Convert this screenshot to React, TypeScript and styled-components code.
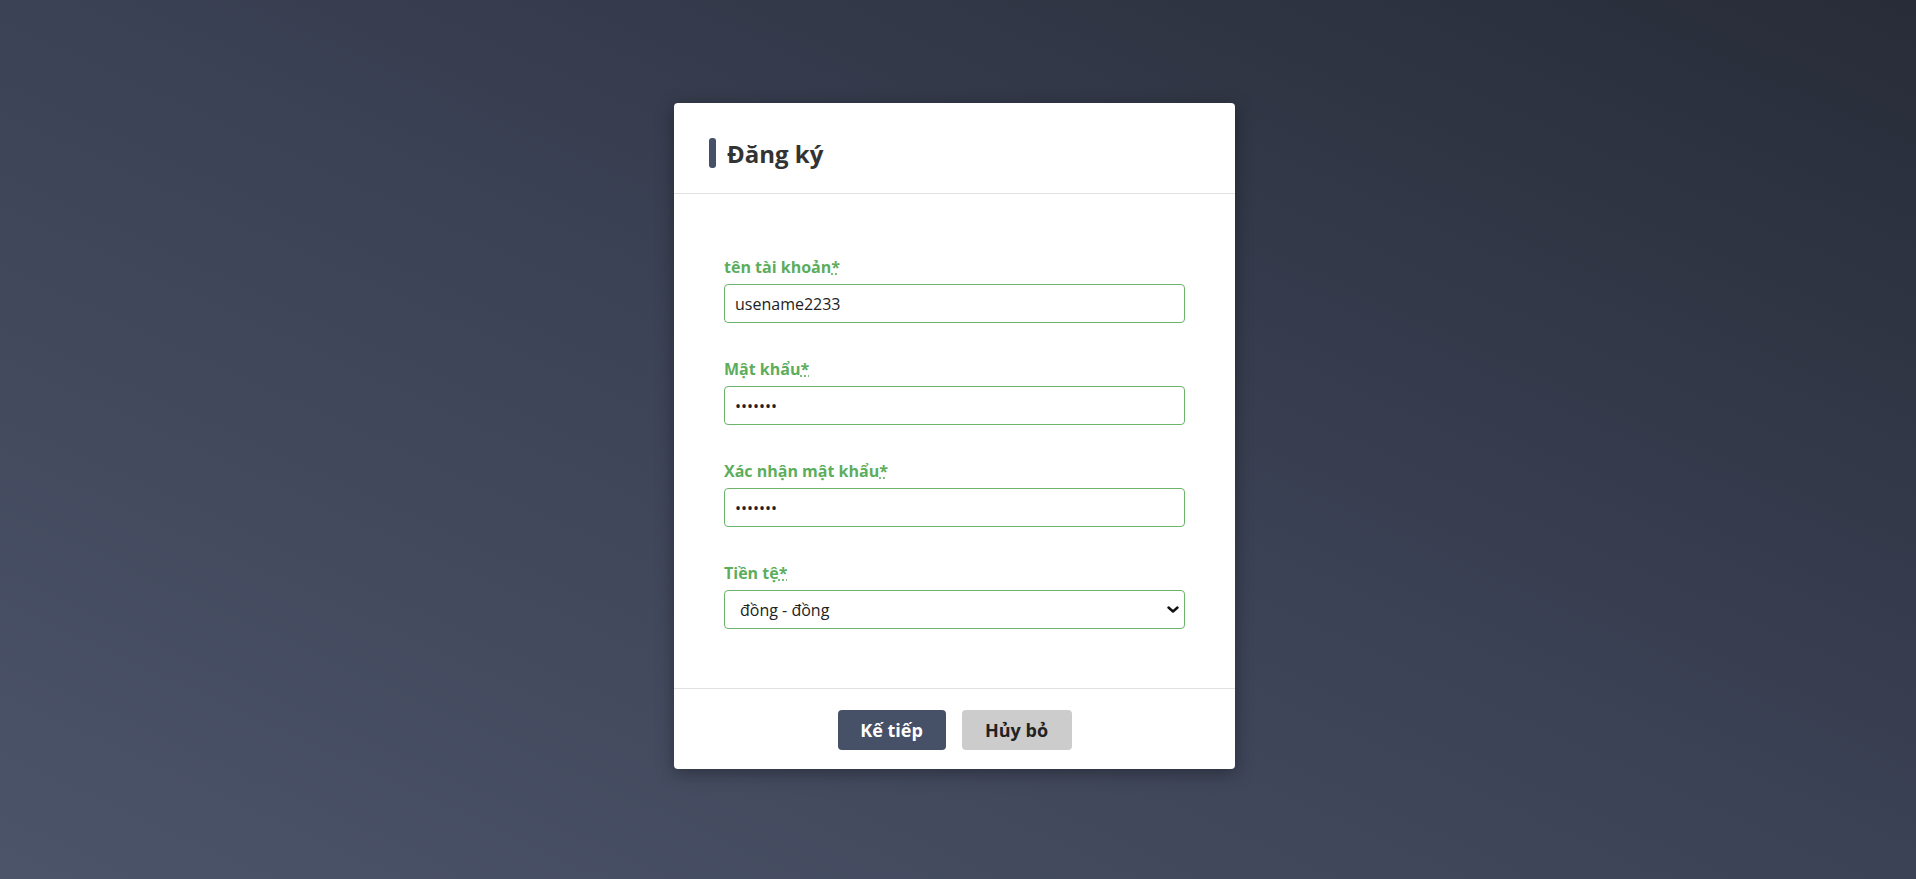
import styled, { createGlobalStyle } from 'styled-components'

const GlobalStyle = createGlobalStyle`
  html, body {
    margin: 0;
    padding: 0;
    height: 100%;
  }
  body {
    font-family: 'Open Sans', 'Noto Sans', sans-serif;
  }
`

const fields = [
  { label: 'tên tài khoản', type: 'text', value: 'usename2233' },
  { label: 'Mật khẩu', type: 'password', value: '1234567' },
  { label: 'Xác nhận mật khẩu', type: 'password', value: '1234567' },
]

const App = () => {
  return (
    <Page>
      <GlobalStyle />
      <Card>
        <Header>
          <Bar />
          <Title>Đăng ký</Title>
        </Header>
        <Body>
          {fields.map((f) => (
            <Group key={f.label}>
              <Label>
                {f.label}
                <Req title="required">*</Req>
              </Label>
              <Input type={f.type} defaultValue={f.value} />
            </Group>
          ))}
          <Group>
            <Label>
              Tiền tệ
              <Req title="required">*</Req>
            </Label>
            <SelectWrap>
              <Select defaultValue="vnd">
                <option value="vnd">đồng - đồng</option>
              </Select>
              <Chevron viewBox="0 0 12 7" width="12" height="7">
                <path d="M1.5 1.5 L6 5.5 L10.5 1.5" fill="none" stroke="#111" strokeWidth="2.4" strokeLinecap="round" strokeLinejoin="round" />
              </Chevron>
            </SelectWrap>
          </Group>
        </Body>
        <Footer>
          <Button $primary>Kế tiếp</Button>
          <Button>Hủy bỏ</Button>
        </Footer>
      </Card>
    </Page>
  )
}

export default App

const Page = styled.div`
  min-height: 100vh;
  display: flex;
  align-items: center;
  justify-content: center;
  background: linear-gradient(to top right, #4c546a 0%, #3b4255 50%, #282c38 100%);
`

const Card = styled.div`
  width: 561px;
  margin-left: -7px;
  margin-top: -7px;
  background: #fff;
  border-radius: 4px;
  box-shadow: 0 4px 18px rgba(0, 0, 0, 0.35);
`

const Header = styled.div`
  display: flex;
  align-items: center;
  gap: 11px;
  height: 91px;
  padding: 10px 0 0 35px;
  box-sizing: border-box;
  border-bottom: 1px solid #e2e2e2;
`

const Bar = styled.span`
  width: 7px;
  height: 30px;
  border-radius: 3px;
  background: #465066;
`

const Title = styled.h2`
  margin: 0;
  font-size: 24px;
  font-weight: 700;
  color: #333;
`

const Body = styled.div`
  padding: 61px 50px 20px;
`

const Group = styled.div`
  display: flex;
  flex-direction: column;
  gap: 5px;
  margin-bottom: 34px;
  &:last-child {
    margin-bottom: 39px;
  }
`

const Label = styled.label`
  font-size: 16px;
  line-height: 24px;
  font-weight: 700;
  color: #5cad5c;
`

const Req = styled.abbr`
  text-decoration: underline dotted;
  cursor: help;
`

const Input = styled.input`
  box-sizing: border-box;
  width: 100%;
  height: 39px;
  padding: 0 10px;
  border: 1px solid #6cb36c;
  border-radius: 4px;
  font-family: 'Open Sans', 'Noto Sans', sans-serif;
  font-size: 16px;
  color: #222;
  outline: none;
`

const SelectWrap = styled.div`
  position: relative;
`

const Select = styled.select`
  box-sizing: border-box;
  width: 100%;
  height: 39px;
  padding: 0 30px 0 15px;
  border: 1px solid #6cb36c;
  border-radius: 4px;
  background: #fff;
  appearance: none;
  font-family: 'Open Sans', 'Noto Sans', sans-serif;
  font-size: 16px;
  color: #222;
  outline: none;
`

const Chevron = styled.svg`
  position: absolute;
  right: 6px;
  top: 16px;
  pointer-events: none;
`

const Footer = styled.div`
  display: flex;
  justify-content: center;
  gap: 16px;
  padding: 21px 0 19px;
  border-top: 1px solid #e2e2e2;
`

const Button = styled.button<{ $primary?: boolean }>`
  width: ${(p) => (p.$primary ? '108px' : '110px')};
  height: 40px;
  border: none;
  border-radius: 4px;
  font-family: 'Open Sans', 'Noto Sans', sans-serif;
  font-size: 18px;
  font-weight: 700;
  cursor: pointer;
  background: ${(p) => (p.$primary ? '#465066' : '#cccccc')};
  color: ${(p) => (p.$primary ? '#fff' : '#222')};
`
